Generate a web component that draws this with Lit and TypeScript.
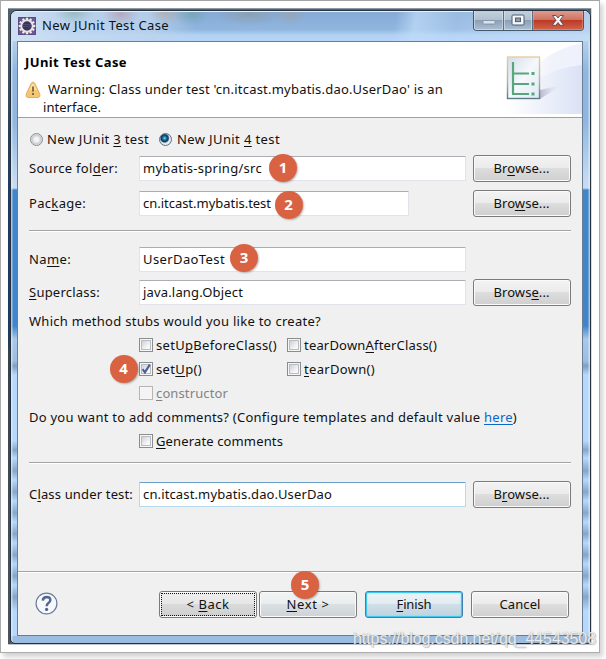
import { LitElement, html, css, svg, nothing } from "lit";
import { customElement, property } from "lit/decorators.js";
import { classMap } from "lit/directives/class-map.js";

/** One line of text, tracked so that it fills the given width. */
@customElement("fit-text")
class FitText extends LitElement {
  @property({ type: Number }) w = 0;
  static styles = css`
    :host { display: inline-block; white-space: pre; flex: none; }
  `;
  firstUpdated() {
    const n = (this.textContent ?? "").length;
    const natural = this.getBoundingClientRect().width;
    if (this.w && n) this.style.letterSpacing = `${(this.w - natural) / n}px`;
  }
  render() {
    return html`<slot></slot>`;
  }
}

@customElement("push-button")
class PushButton extends LitElement {
  @property() kind = "";
  static styles = css`
    :host { display: block; flex: none; width: 98px; height: 27px; }
    .btn {
      box-sizing: border-box; width: 100%; height: 100%;
      display: flex; align-items: center; justify-content: center;
      border: 1px solid #7b7b7b; border-radius: 3px; padding-bottom: 1px;
      background: linear-gradient(#f3f3f3, #ebebeb 49%, #dddddd 50%, #cfcfcf);
      box-shadow: inset 0 0 0 1px #fafafa;
    }
    .focus { padding: 1px 1px 2px; position: relative; background: linear-gradient(#efefef, #e6e6e6 49%, #dadada 50%, #cecece); }
    .focus::after { content: ""; position: absolute; inset: 1px; border: 1px dotted #111; }
    .cool { background: linear-gradient(#f2f4f4, #e9edee 49%, #dbe0e3 50%, #cdd3d6); }
    .default {
      border-color: #3c7fb1;
      background: linear-gradient(#eef3f6, #e2ebf0 49%, #d0dfe7 50%, #bfd2dd);
      box-shadow: inset 0 0 0 1px #3fc7f2, inset 0 0 2px 1px #7fdcf8;
    }
  `;
  render() {
    return html`<div class=${classMap({ btn: true, [this.kind || "plain"]: true })}><slot></slot></div>`;
  }
}

@customElement("check-box")
class CheckBox extends LitElement {
  @property({ type: Boolean }) checked = false;
  @property({ type: Boolean }) disabled = false;
  static styles = css`
    :host { display: flex; align-items: center; height: 24px; gap: 3px; }
    .box {
      box-sizing: border-box; width: 14px; height: 14px; flex: none; display: block;
      border: 1px solid #8b8c8d; padding: 1px; background: #f6f6f6; margin-top: -1px;
    }
    .in { box-sizing: border-box; width: 10px; height: 10px; border: 1px solid #b9bdc3; background: linear-gradient(135deg, #cdd1d7, #f8f8f8 75%); }
    .off { border-color: #b5b5b5; }
    .off .in { border-color: #f4f4f4; background: #f4f4f4; }
    .lbl { padding-bottom: 1px; }
    .gray { color: #838383; }
    svg { display: block; margin: -2px 0 0 -1px; }
  `;
  render() {
    return html`<span class=${classMap({ box: true, off: this.disabled })}
        ><div class="in">${this.checked
          ? html`<svg width="11" height="12" viewBox="0 0 11 12"><path d="M1.6 6.2 L3.9 9.4 L8.8 1.6" fill="none" stroke="#4a5f97" stroke-width="2.1"/></svg>`
          : nothing}</div></span>
      <span class=${classMap({ lbl: true, gray: this.disabled })}><slot></slot></span>`;
  }
}

const teeth = [0, 30, 60, 90, 120, 150, 180, 210, 240, 270, 300, 330];

const badges = [
  { n: 1, x: 269, y: 154 },
  { n: 2, x: 274.5, y: 191 },
  { n: 3, x: 230, y: 244 },
  { n: 4, x: 109.5, y: 354.5 },
  { n: 5, x: 291, y: 571 },
];

@customElement("app-root")
class AppRoot extends LitElement {
  static styles = css`
    :host {
      display: block; width: 606px; height: 659px; position: relative; overflow: hidden;
      background: #fff; color: #111;
      font: 13px/18px "Noto Sans", "Open Sans", sans-serif;
    }
    * { box-sizing: border-box; }
    u { text-decoration-skip-ink: none; text-underline-offset: 2px; text-decoration-thickness: 1px; }
    .sheet {
      width: 600px; height: 653px; padding: 8px 0 0 8px; background: #fff;
      border: 1px solid #acacac; border-top-color: #a4a4a4; border-width: 1px;
      box-shadow: 3px 4px 5px #d2d2d2;
    }
    .shot {
      width: 584px; height: 637px; margin: -1px 0 0 -1px; padding: 2px 1px 1px 2px;
      background:
        linear-gradient(90deg, transparent 583px, #d9dcdf 583px),
        linear-gradient(transparent 636px, #c3c7cb 636px),
        linear-gradient(#8c98a5 0 1px, #56626f 1px 3px, transparent 3px),
        linear-gradient(#50606f, #26405c 20%, #1b3d62 30% 52%, #36424e 54%, #4a5560);
    }
    .win {
      width: 581px; height: 634px; border: 1px solid #26313c; border-radius: 7px 7px 5px 5px;
      padding: 0 7px 8px 6px; overflow: hidden;
      background:
        linear-gradient(90deg, #e9f4ff99 0 1px, transparent 2px calc(100% - 2px), #e9f4ff99 calc(100% - 1px)),
        linear-gradient(transparent 625px, #9bbde2 625px),
        linear-gradient(#c6d9ee 0, #b6d0ec 30px, #8fb7e0 60px, #8fb6e0 110px, #bcd5ef 160px, #c9dcf0 177px, #3f86cd 179px, #4085cc 315px, #a7c8ea 328px, #9cbddf 350px, #7f9fc2 355px, #b5d8fc 364px, #b5d8fc 430px, #86a6c9 439px, #b5d8fc 447px, #86a6c9 460px, #b5d8fc 469px, #86a6c9 481px, #b5d8fc 490px, #86a6c9 502px, #b5d8fc 511px, #86a6c9 523px, #b5d8fc 532px, #86a6c9 544px, #b5d8fc 553px, #86a6c9 565px, #b5d8fc 574px, #86a6c9 586px, #b5d8fc 600px);
    }
    .title {
      height: 30px; margin: 0 -7px 0 -6px; padding: 0 7px 0 7px; display: flex; align-items: flex-start;
      border-top: 1px solid #e8f2fc;
      background:
        radial-gradient(ellipse 20px 12px at 63px 0, #6fa19077, transparent),
        radial-gradient(ellipse 18px 12px at 110px 2px, #b67f8b77, transparent),
        radial-gradient(ellipse 18px 12px at 155px 0, #b7a08d88, transparent),
        radial-gradient(ellipse 18px 12px at 180px 2px, #6b9e9c88, transparent),
        radial-gradient(ellipse 34px 12px at 238px 2px, #8c9a9c99, transparent),
        radial-gradient(ellipse 16px 12px at 279px 2px, #a1a09c88, transparent),
        linear-gradient(90deg, #cfe0f3 0, #c6daf1cc 60px, #bcd4eecc 140px, #bcd4ee00 185px),
        linear-gradient(100deg, transparent 380px, #c0dbf8bb 400px, #c0dbf855 440px, #c9dff7aa),
        linear-gradient(#86abd6, #90b5de 60%, #b2d2f4 80%, #b6d5f6);
    }
    .logo { display: block; margin: 5px 6px 0 0; flex: none; }
    .name { margin-top: 4px; flex: 1; }
    .caps {
      display: flex; height: 21px; width: 111px; margin: -2px -1px 0 0; border: 1px solid #46586c; border-top: 0;
      border-radius: 0 0 4px 4px; overflow: hidden;
    }
    .cap {
      display: flex; align-items: center; justify-content: center; width: 30px; border-right: 1px solid #5c6e82;
      background: linear-gradient(#c5d2df, #b1c0cf 48%, #8b9eb3 50%, #abc0d4); box-shadow: inset 0 0 0 1px #e3ecf588;
    }
    .max { width: 29px; }
    .close { width: 50px; border: 0; background: linear-gradient(#dfa093, #d07361 48%, #bb3824 50%, #d2644a); box-shadow: inset 0 0 0 1px #f3b5a666; }
    .client {
      width: 566px; height: 595px; border: 1px solid #6b7f93; background: #f0f0f0;
      display: flex; flex-direction: column;
    }
    .head { height: 76px; background: #fff; border-bottom: 1px solid #a0a0a0; display: flex; flex: none; }
    .words { width: 470px; padding: 10px 0 0 7px; }
    .h1 { font-weight: 700; color: #000; line-height: 20px; }
    .warn { display: flex; height: 18px; margin-top: 8px; gap: 7px; }
    .warn svg { display: block; margin-top: 1px; }
    .second { padding-left: 18px; }
    .art { display: block; flex: none; margin-left: auto; }
    .form { padding: 10px 11px 0 11px; height: 453px; flex: none; }
    .radios { display: flex; height: 24px; align-items: center; padding-bottom: 2px; }
    .radio {
      width: 13px; height: 13px; border-radius: 50%; border: 1px solid #8c8e90; margin: 1px 4px 0 1px;
      background: radial-gradient(circle at 50% 50%, #f4f4f4 25%, #c6cacf 60%, #f4f4f4 75%);
    }
    .radios fit-text + .radio { margin-left: 10px; margin-right: 5px; }
    .on { border-color: #5d7084; background: radial-gradient(circle at 42% 38%, #8fe0fa 0, #1c78ae 18%, #0d3351 38%, #e4ebf0 54%, #dfe5ea); }
    .row { display: grid; grid-template-columns: 110px 327px 98px; column-gap: 0; align-items: center; height: 27px; margin-top: 8px; }
    .row push-button { margin-left: 6.5px; }
    .row > fit-text { margin-bottom: 1px; justify-self: start; }
    .r1 { margin-top: 3px; }
    .field {
      height: 25px; background: #fff; border: 1px solid #e2e3ea; border-top-color: #abadb3; padding: 2px 0 0 3px;
      border-radius: 1px; line-height: 18px;
    }
    .narrow { width: 270px; }
    .active { border-color: #b7d9ed; border-top-color: #6ba0c7; }
    .sep { height: 2px; background: #a5a5a5; border-bottom: 1px solid #fff; margin-top: 13px; }
    .r3 { margin-top: 14px; }
    .r4 { margin-top: 6px; }
    .line { height: 24px; display: flex; align-items: center; }
    .q { margin-top: 3px; }
    .checks { display: grid; grid-template-columns: 148px 1fr; padding-left: 110px; }
    .sep2 { margin-top: 9px; }
    .r5 { margin-top: 17px; }
    .link { color: #0a66cc; text-decoration: underline; text-underline-offset: 2px; }
    .foot { border-top: 1px solid #a5a5a5; box-shadow: inset 0 1px #fff; flex: 1; display: flex; padding: 19px 0 0 17px; }
    .help { display: block; margin: 1px 101px 0 0; flex: none; }
    .foot push-button { margin-right: 2px; }
    .foot .gap { margin-right: 8px; }
    .badge {
      position: absolute; width: 28px; height: 28px; border-radius: 50%; background: #d96243; color: #fff;
      font: 700 15px/27px "Noto Sans", sans-serif; text-align: center; box-shadow: 1px 1px 2px #0004;
    }
    .mark {
      position: absolute; left: 353px; top: 630px; font: 16px/18px "Liberation Sans", Arial, sans-serif; color: #fffc;
      text-shadow: 0 0 1px #999, 1px 1px 1px #9998;
    }
  `;

  renderArt() {
    return svg`
      <defs>
        <linearGradient id="sweep"><stop offset=".1" stop-color="#fff"/><stop offset="1" stop-color="#dbe2f5"/></linearGradient>
        <linearGradient id="sweep2"><stop offset=".2" stop-color="#fff"/><stop offset=".6" stop-color="#f1f3fb"/><stop offset="1" stop-color="#eef1fb"/></linearGradient>
        <linearGradient id="page" x2="1" y2="1"><stop offset="0" stop-color="#d6deea"/><stop offset=".5" stop-color="#f5f8fc"/><stop offset="1" stop-color="#dfe9f2"/></linearGradient>
        <linearGradient id="edge" x2="0" y2="1"><stop offset="0" stop-color="#e8cda4"/><stop offset=".6" stop-color="#a9b5a6"/><stop offset="1" stop-color="#587d83"/></linearGradient>
        <linearGradient id="shade"><stop offset="0" stop-color="#b9b8cf"/><stop offset="1" stop-color="#e4e7f5" stop-opacity="0"/></linearGradient>
      </defs>
      <path d="M8 72 Q28 12 84 1 V72 Z" fill="url(#sweep2)"/>
      <path d="M0 72 Q34 28 84 23 V72 Z" fill="url(#sweep)"/>
      <path d="M42 48 L64 43 L42 57 Z" fill="url(#shade)"/>
      <rect x="9.5" y="15" width="32" height="41.5" fill="url(#page)" stroke="url(#edge)" stroke-width="1.4"/>
      <path d="M15 20 V52 M14 31.5 H31 M14 42 H31 M14 52 H31" fill="none" stroke="#5aa67c" stroke-width="2.2"/>
      <path d="M33.5 31.5 H36.5 M33.5 42 H36.5 M33.5 52 H36.5" stroke="#5aa67c" stroke-width="2.8"/>`;
  }

  render() {
    return html`
      <div class="sheet"><div class="shot"><div class="win">
        <div class="title">
          <svg class="logo" width="18" height="18" viewBox="0 0 18 18">
            <rect width="18" height="18" fill="#6a5a93"/>
            <rect x=".5" y=".5" width="17" height="17" fill="none" stroke="#5b4d83"/>
            ${teeth.map((a) => svg`<rect x="7.9" y=".7" width="2.2" height="3" fill="#efecea" transform="rotate(${a} 9 9)"/>`)}
            <circle cx="9" cy="9" r="5.7" fill="#39345a" stroke="#e6e2e4" stroke-width="2"/>
            <path d="M5 7.5H13M4.6 9.5H13.4" stroke="#55507c" stroke-width=".8"/>
          </svg>
          <div class="name"><fit-text w="127">New JUnit Test Case</fit-text></div>
          <div class="caps">
            <div class="cap"><svg width="14" height="12"><rect x="1" y="6.5" width="12" height="3.5" rx=".5" fill="#d9e1e9" stroke="#7c8da0" stroke-width=".8"/></svg></div>
            <div class="cap max"><svg width="14" height="12"><rect x="1" y="1" width="12" height="10" rx="1" fill="#f5f7f9" stroke="#4e5d70"/><rect x="4.5" y="4" width="5" height="3.6" fill="#8e9fb8" stroke="#4e5d70"/></svg></div>
            <div class="cap close"><svg width="14" height="13" viewBox="0 0 14 13"><path d="M1.5 1.5H5L7 4L9 1.5H12.5L9 6.3L12.8 11.3H9.2L7 8.6L4.8 11.3H1.2L5 6.3Z" fill="#f6f6f6" stroke="#5b4550" stroke-width=".9"/></svg></div>
          </div>
        </div>
        <div class="client">
          <div class="head">
            <div class="words">
              <div class="h1"><fit-text w="102">JUnit Test Case</fit-text></div>
              <div class="warn">
                <svg width="16" height="18" viewBox="0 0 16 18">
                  <path d="M6.3 2.2Q8 -.2 9.7 2.2L14.8 13.2Q15.8 16.3 13 16.5H3Q.2 16.3 1.2 13.2Z" fill="#f6c673" stroke="#dfae62"/>
                  <path d="M7 3.4Q8 2 9 3.4L11.5 9H4.5Z" fill="#fde0a4"/>
                  <path d="M8 5.4V10.5M8 12V14" stroke="#6a5230" stroke-width="1.6"/>
                </svg>
                <fit-text w="395">Warning: Class under test 'cn.itcast.mybatis.dao.UserDao' is an</fit-text>
              </div>
              <div class="second"><fit-text w="58">interface.</fit-text></div>
            </div>
            <svg class="art" width="84" height="75">${this.renderArt()}</svg>
          </div>
          <div class="form">
            <div class="radios">
              <span class="radio"></span><fit-text w="102">New JUnit <u>3</u> test</fit-text>
              <span class="radio on"></span><fit-text w="103">New JUnit <u>4</u> test</fit-text>
            </div>
            <div class="row r1">
              <fit-text w="89">Source fol<u>d</u>er:</fit-text>
              <div class="field"><fit-text w="119">mybatis-spring/src</fit-text></div>
              <push-button><fit-text w="56">Br<u>o</u>wse...</fit-text></push-button>
            </div>
            <div class="row">
              <fit-text w="57">Pac<u>k</u>age:</fit-text>
              <div class="field narrow"><fit-text w="128">cn.itcast.mybatis.test</fit-text></div>
              <push-button><fit-text w="56">Bro<u>w</u>se...</fit-text></push-button>
            </div>
            <div class="sep"></div>
            <div class="row r3">
              <fit-text w="42">Na<u>m</u>e:</fit-text>
              <div class="field"><fit-text w="82">UserDaoTest</fit-text></div>
            </div>
            <div class="row r4">
              <fit-text w="71"><u>S</u>uperclass:</fit-text>
              <div class="field"><fit-text w="100">java.lang.Object</fit-text></div>
              <push-button><fit-text w="56">Brows<u>e</u>...</fit-text></push-button>
            </div>
            <div class="line q"><fit-text w="292">Which method stubs would you like to create?</fit-text></div>
            <div class="checks">
              <check-box><fit-text w="121">setU<u>p</u>BeforeClass()</fit-text></check-box>
              <check-box><fit-text w="133">tearDown<u>A</u>fterClass()</fit-text></check-box>
              <check-box checked><fit-text w="46">set<u>U</u>p()</fit-text></check-box>
              <check-box><fit-text w="71"><u>t</u>earDown()</fit-text></check-box>
              <check-box disabled><fit-text w="72"><u>c</u>onstructor</fit-text></check-box>
            </div>
            <div class="line"><fit-text w="488">Do you want to add comments? (Configure templates and default value <span class="link">here</span>)</fit-text></div>
            <div class="checks"><check-box><fit-text w="127"><u>G</u>enerate comments</fit-text></check-box></div>
            <div class="sep sep2"></div>
            <div class="row r5">
              <fit-text w="104">C<u>l</u>ass under test:</fit-text>
              <div class="field active"><fit-text w="189">cn.itcast.mybatis.dao.UserDao</fit-text></div>
              <push-button><fit-text w="56">B<u>r</u>owse...</fit-text></push-button>
            </div>
          </div>
          <div class="foot">
            <svg class="help" width="23" height="23" viewBox="0 0 23 23">
              <circle cx="11.5" cy="11.5" r="10.4" fill="#f6f8fb" stroke="#6a7c9b" stroke-width="1.2"/>
              <path d="M7.8 8.6Q8 4.9 11.7 4.9Q15.4 5 15.3 8.2Q15.2 10 13.2 11.2Q11.7 12.2 11.7 14.3" fill="none" stroke="#52678f" stroke-width="2.5"/>
              <circle cx="11.6" cy="17.4" r="1.6" fill="#52678f"/>
            </svg>
            <push-button kind="focus"><fit-text w="43">&lt; <u>B</u>ack</fit-text></push-button>
            <push-button kind="cool" class="gap"><fit-text w="43"><u>N</u>ext &gt;</fit-text></push-button>
            <push-button kind="default" class="gap"><fit-text w="35"><u>F</u>inish</fit-text></push-button>
            <push-button><fit-text w="41">Cancel</fit-text></push-button>
          </div>
        </div>
      </div></div></div>
      ${badges.map((b) => html`<div class="badge" style="left:${b.x}px;top:${b.y}px">${b.n}</div>`)}
      <div class="mark"><fit-text w="243">https://blog.csdn.net/qq_44543508</fit-text></div>
    `;
  }
}
